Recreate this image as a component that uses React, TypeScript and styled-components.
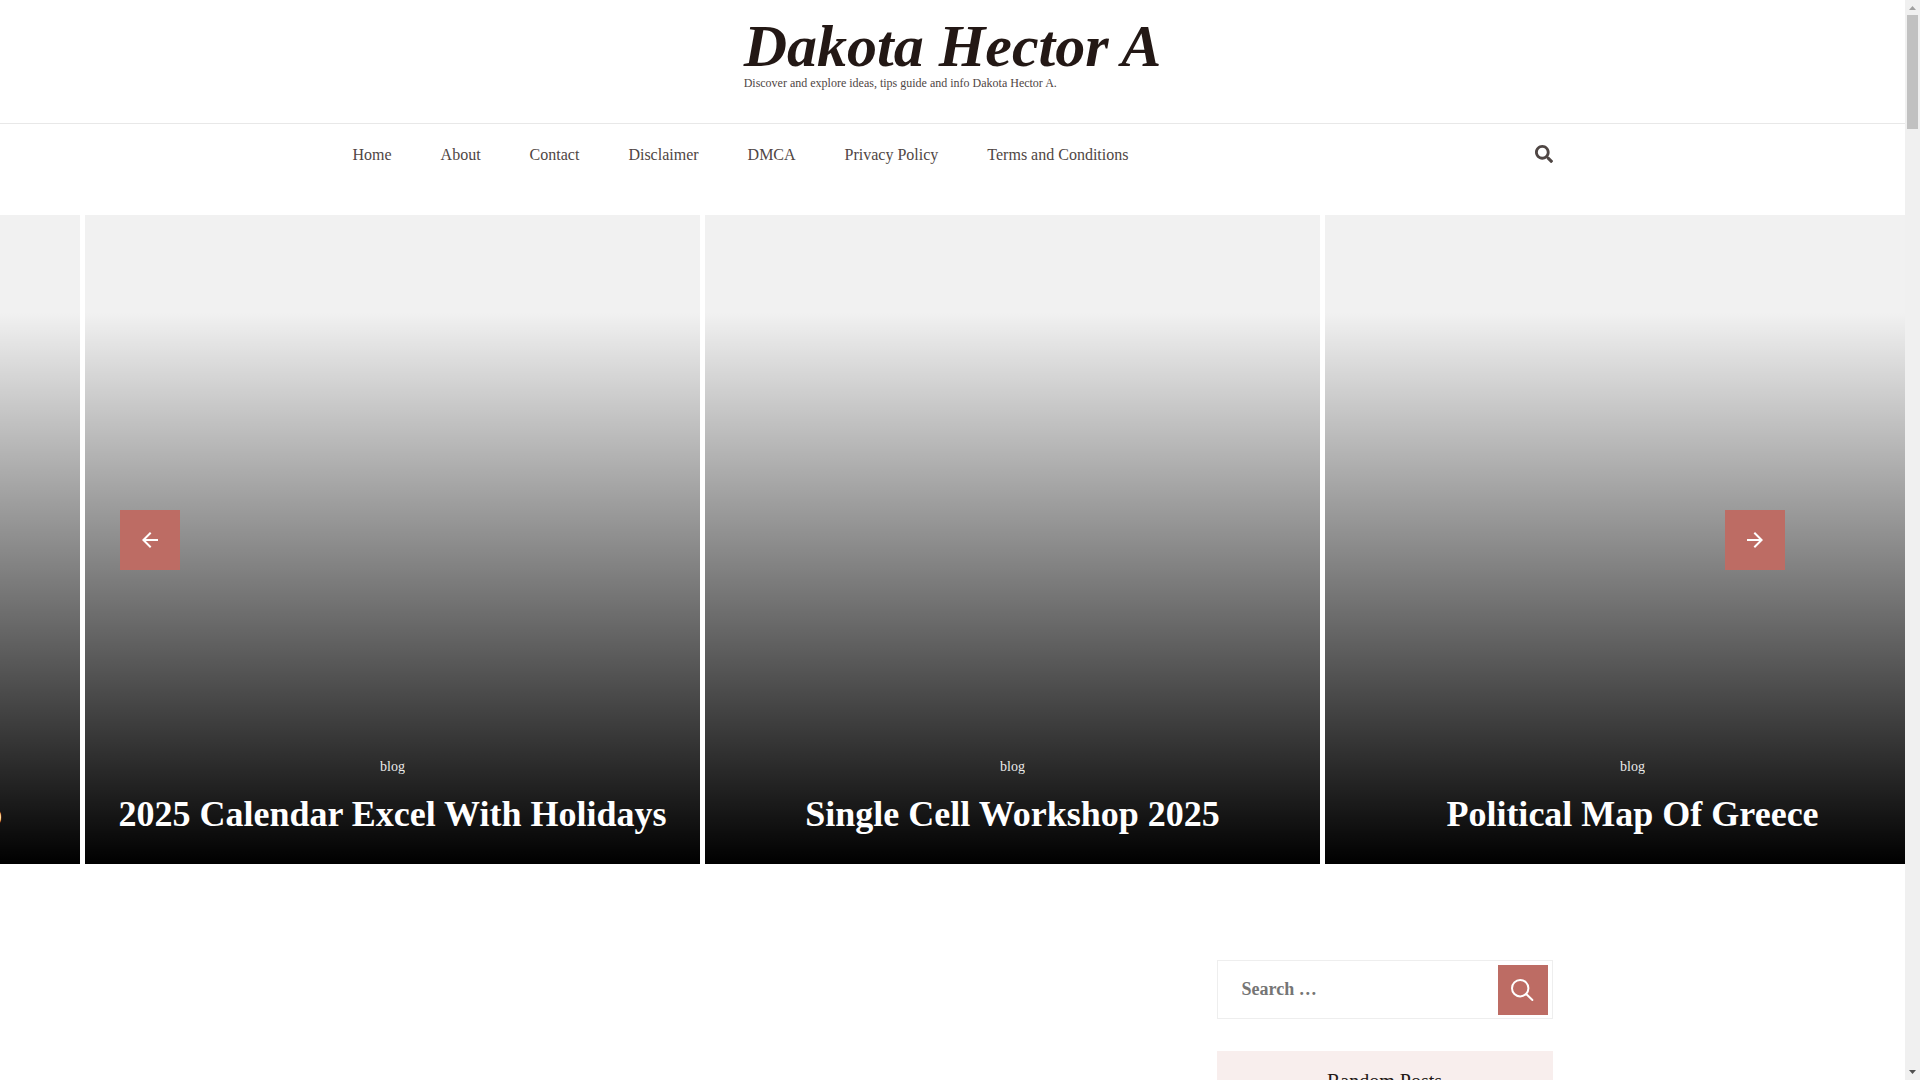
import React from "react";
import styled, { createGlobalStyle } from "styled-components";
import { FaSearch } from "react-icons/fa";

const GlobalStyle = createGlobalStyle`
  *, *::before, *::after { box-sizing: border-box; }
  html, body { margin: 0; overflow: hidden; }
  body {
    background: #fff;
    color: #171717;
    font-family: "Liberation Serif", "Times New Roman", serif;
    font-size: 18px;
  }
  a { color: inherit; text-decoration: none; }
`;

const accent = "#bd6c64";

const Window = styled.div`
  display: grid;
  grid-template-columns: minmax(0, 1fr) 15px;
  height: 100vh;
`;

const Page = styled.div`
  overflow: hidden;
`;

const Container = styled.div`
  max-width: 1200px;
  margin: 0 auto;
`;

const Branding = styled.div`
  display: flex;
  justify-content: center;
  padding: 16px 0 33px;
  border-bottom: 1px solid #e8e8e8;
`;

const SiteTitle = styled.h1`
  margin: 0;
  color: #231815;
  font-size: 60px;
  font-style: italic;
  font-weight: 700;
  line-height: 60px;
`;

const Tagline = styled.p`
  margin: 0;
  color: #4f4644;
  font-size: 12px;
  line-height: 14px;
`;

const NavBar = styled(Container)`
  display: flex;
  justify-content: space-between;
  align-items: center;
  height: 62px;
`;

const Menu = styled.ul`
  display: flex;
  gap: 49px;
  margin: 0;
  padding: 0;
  list-style: none;
  color: #4f4644;
  font-size: 16px;
  line-height: 28px;
`;

const IconButton = styled.button`
  display: flex;
  padding: 0 0 2px;
  border: 0;
  background: none;
  color: #4f4644;
  font-size: 18px;
`;

const Carousel = styled.section`
  position: relative;
  margin-top: 29px;
  overflow: hidden;
`;

const Track = styled.div`
  display: flex;
  gap: 5px;
  margin-left: -535px;
`;

const Slide = styled.article`
  display: flex;
  flex: none;
  flex-direction: column;
  justify-content: flex-end;
  align-items: center;
  width: 615px;
  height: 649px;
  padding: 0 30px 25px;
  background: linear-gradient(to bottom, transparent 15%, #000) #f1f1f1;
  color: #fff;
  text-align: center;
`;

const Category = styled.a`
  font-size: 14px;
  line-height: 24px;
  opacity: 0.9;
`;

const SlideTitle = styled.h2`
  margin: 10px 0 0;
  font-size: 36px;
  font-weight: 700;
  line-height: 50px;
`;

const Arrow = styled.button<{ $side: "left" | "right" }>`
  position: absolute;
  top: 50%;
  ${({ $side }) => $side}: 120px;
  display: grid;
  place-items: center;
  width: 60px;
  height: 60px;
  padding: 0;
  border: 0;
  background: ${accent};
  color: #fff;
  transform: translateY(-50%);
`;

const Content = styled(Container)`
  display: flex;
  justify-content: flex-end;
  padding-top: 96px;
`;

const Sidebar = styled.aside`
  display: flex;
  flex-direction: column;
  gap: 32px;
  width: 336px;
`;

const SearchForm = styled.form`
  display: flex;
  align-items: center;
  height: 59px;
  padding: 4px;
  border: 1px solid #eee;
`;

const SearchInput = styled.input`
  flex: 1;
  min-width: 0;
  height: 50px;
  padding: 0 20px;
  border: 0;
  background: transparent;
  color: #171717;
  font: 700 18px "Liberation Serif", "Times New Roman", serif;
  &::placeholder { color: #757575; opacity: 1; }
`;

const SearchSubmit = styled.button`
  display: grid;
  place-items: center;
  width: 50px;
  height: 50px;
  padding: 0;
  border: 0;
  background: ${accent};
  color: #fff;
`;

const WidgetTitle = styled.h2`
  margin: 0;
  padding: 15px 20px;
  background: #f8eeed;
  color: #231815;
  font-size: 20px;
  font-weight: 400;
  line-height: 30px;
  text-align: center;
`;

const ScrollTrack = styled.div`
  display: flex;
  flex-direction: column;
  align-items: center;
  background: #f0f0f0;
`;

const ScrollCap = styled.svg`
  flex: none;
  width: 15px;
  height: 15px;
`;

const ScrollThumb = styled.div`
  width: 11px;
  height: 114px;
  margin-bottom: auto;
  background: #c1c1c1;
`;

const links = ["Home", "About", "Contact", "Disclaimer", "DMCA", "Privacy Policy", "Terms and Conditions"];
const slides = [
  "Free Photo Editing Workshop",
  "2025 Calendar Excel With Holidays",
  "Single Cell Workshop 2025",
  "Political Map Of Greece",
];

export default function App() {
  return (
    <>
      <GlobalStyle />
      <Window>
        <Page>
          <header>
            <Branding>
              <div>
                <SiteTitle><a href="#">Dakota Hector A</a></SiteTitle>
                <Tagline>Discover and explore ideas, tips guide and info Dakota Hector A.</Tagline>
              </div>
            </Branding>
            <NavBar as="nav">
              <Menu>
                {links.map((label) => (
                  <li key={label}><a href="#">{label}</a></li>
                ))}
              </Menu>
              <IconButton type="button" aria-label="Open search"><FaSearch /></IconButton>
            </NavBar>
          </header>
          <Carousel>
            <Track>
              {slides.map((title) => (
                <Slide key={title}>
                  <Category href="#">blog</Category>
                  <SlideTitle><a href="#">{title}</a></SlideTitle>
                </Slide>
              ))}
            </Track>
            <Arrow type="button" $side="left" aria-label="Previous">
              <svg width="16" height="16" viewBox="0 0 16 16" fill="none" stroke="currentColor" strokeWidth="2">
                <path d="M16 8H1.5M8.7 0.7L1.4 8l7.3 7.3" />
              </svg>
            </Arrow>
            <Arrow type="button" $side="right" aria-label="Next">
              <svg width="16" height="16" viewBox="0 0 16 16" fill="none" stroke="currentColor" strokeWidth="2">
                <path d="M0 8h14.5M7.3 0.7L14.6 8l-7.3 7.3" />
              </svg>
            </Arrow>
          </Carousel>
          <Content as="main">
            <Sidebar>
              <SearchForm role="search">
                <SearchInput type="search" aria-label="Search for" placeholder="Search …" />
                <SearchSubmit type="button" aria-label="Search">
                  <svg width="24" height="24" viewBox="0 0 24 24" fill="none" stroke="currentColor" strokeWidth="2" strokeLinecap="round">
                    <circle cx="9.2" cy="10.2" r="8.2" />
                    <path d="M15.2 16l6.2 6" />
                  </svg>
                </SearchSubmit>
              </SearchForm>
              <WidgetTitle>Random Posts</WidgetTitle>
            </Sidebar>
          </Content>
        </Page>
        <ScrollTrack aria-hidden="true">
          <ScrollCap viewBox="0 0 15 15"><path d="M4 10h7L7.5 6z" fill="#a0a0a0" /></ScrollCap>
          <ScrollThumb />
          <ScrollCap viewBox="0 0 15 15"><path d="M4 5h7L7.5 9z" fill="#505050" /></ScrollCap>
        </ScrollTrack>
      </Window>
    </>
  );
}
